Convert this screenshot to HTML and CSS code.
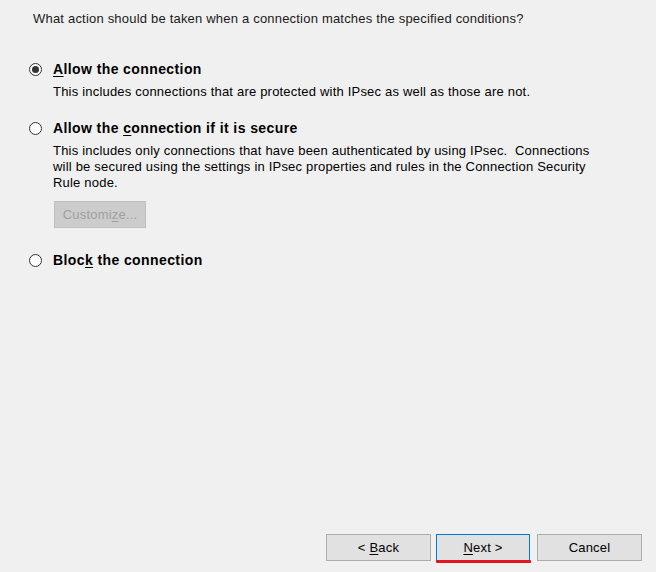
FILE: index.html
```html
<!DOCTYPE html>
<html>
<head>
<meta charset="utf-8">
<link rel="stylesheet" href="styles.css">
</head>
<body>
<div class="page">
  <div class="question">What action should be taken when a connection matches the specified conditions?</div>

  <div class="option first">
    <div class="row">
      <span class="radio checked"></span>
      <span class="label"><u>A</u>llow the connection</span>
    </div>
    <div class="desc">This includes connections that are protected with IPsec as well as those are not.</div>
  </div>

  <div class="option second">
    <div class="row">
      <span class="radio"></span>
      <span class="label">Allow the <u>c</u>onnection if it is secure</span>
    </div>
    <div class="desc">This includes only connections that have been authenticated by using IPsec.&nbsp; Connections<br>will be secured using the settings in IPsec properties and rules in the Connection Security<br>Rule node.</div>
    <div class="customize">Customi<u>z</u>e...</div>
  </div>

  <div class="option third">
    <div class="row">
      <span class="radio"></span>
      <span class="label">Bloc<u>k</u> the connection</span>
    </div>
  </div>

  <div class="footer">
    <button class="btn back">&lt; <u>B</u>ack</button>
    <button class="btn next"><u>N</u>ext &gt;<span class="mark"></span></button>
    <button class="btn cancel">Cancel</button>
  </div>
</div>
</body>
</html>
```
FILE: styles.css
```css
html, body {
  margin: 0;
  padding: 0;
  background: #f0f0f0;
}
body {
  font-family: "Liberation Sans", Arial, sans-serif;
  font-size: 13px;
  letter-spacing: 0.2px;
  color: #000;
}
.page {
  height: 572px;
  display: flex;
  flex-direction: column;
  box-sizing: border-box;
}
.question {
  margin: 11px 0 0 33px;
  line-height: 16px;
  color: #1a1a1a;
}
.option {
  margin-left: 29px;
}
.option.first { margin-top: 34px; }
.option.second { margin-top: 20px; }
.option.third { margin-top: 24px; }
.row {
  display: flex;
  align-items: center;
  height: 16px;
}
.radio {
  width: 13px;
  height: 13px;
  box-sizing: border-box;
  border: 1px solid #333;
  border-radius: 50%;
  background: #fff;
  display: flex;
  align-items: center;
  justify-content: center;
  margin-right: 11px;
  flex: none;
}
.radio.checked::after {
  content: "";
  width: 7px;
  height: 7px;
  border-radius: 50%;
  background: #333;
}
.label {
  font-weight: bold;
  font-size: 14px;
  letter-spacing: 0.4px;
  line-height: 16px;
}
u { text-decoration-thickness: 1px; text-underline-offset: 2px; }
.desc {
  margin: 7px 0 0 24px;
  line-height: 16px;
  white-space: nowrap;
}
.customize {
  margin: 10px 0 0 25px;
  width: 92px;
  height: 27px;
  box-sizing: border-box;
  border: 1px solid #bfbfbf;
  background: #cccccc;
  color: #a0a0a0;
  display: flex;
  align-items: center;
  justify-content: center;
}
.footer {
  margin-top: auto;
  margin-bottom: 11px;
  display: flex;
  justify-content: flex-end;
  padding-right: 14px;
}
.btn {
  position: relative;
  height: 27px;
  box-sizing: border-box;
  border: 1px solid #adadad;
  background: #e1e1e1;
  font-family: "Liberation Sans", Arial, sans-serif;
  font-size: 13px;
  letter-spacing: 0.2px;
  color: #000;
  padding: 0;
}
.back { width: 105px; }
.next {
  width: 94px;
  margin-left: 5px;
  border-color: #0078d7;
}
.cancel {
  width: 105px;
  margin-left: 7px;
}
.mark {
  position: absolute;
  left: -1px;
  right: -2px;
  bottom: -3px;
  height: 3px;
  background: #e3151f;
  border-radius: 1px;
}
```
